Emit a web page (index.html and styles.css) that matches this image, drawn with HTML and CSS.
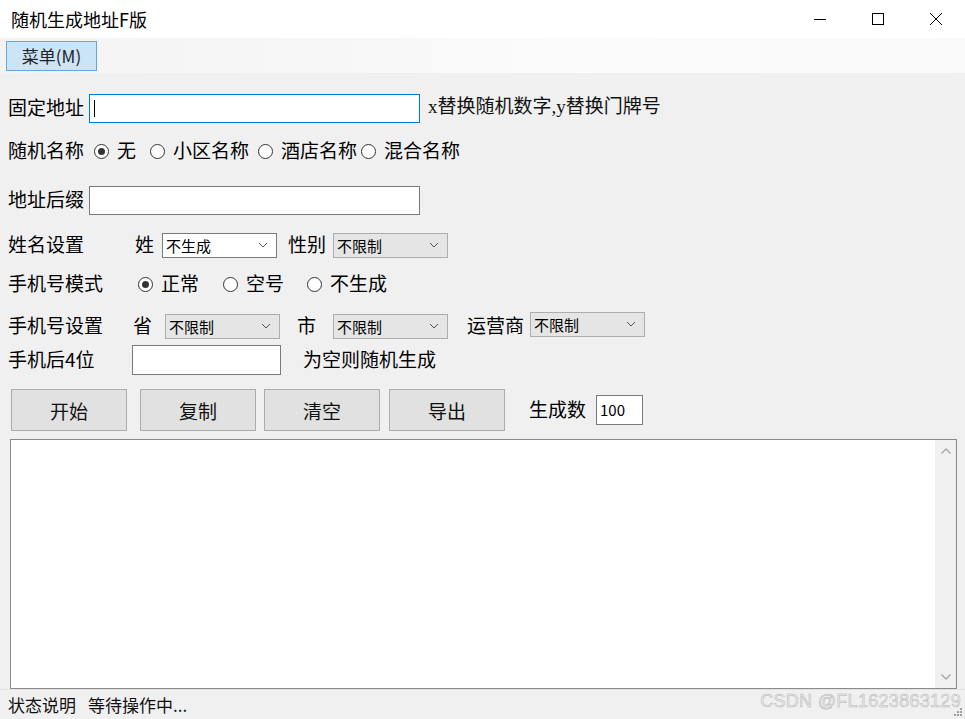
FILE: index.html
```html
<!DOCTYPE html>
<html lang="zh-CN">
<head>
<meta charset="utf-8">
<title>随机生成地址F版</title>
<link rel="stylesheet" href="styles.css">
</head>
<body>
<div class="window">
  <div class="titlebar">
    <div class="title">随机生成地址F版</div>
    <div class="controls">
      <span class="ctl"><svg width="16" height="16" viewBox="0 0 16 16"><path d="M2 8.5h12" stroke="#000" stroke-width="1"/></svg></span>
      <span class="ctl"><svg width="16" height="16" viewBox="0 0 16 16"><rect x="2.5" y="2.5" width="11" height="11" fill="none" stroke="#000" stroke-width="1"/></svg></span>
      <span class="ctl"><svg width="16" height="16" viewBox="0 0 16 16"><path d="M2 2L14 14M14 2L2 14" stroke="#000" stroke-width="1"/></svg></span>
    </div>
  </div>
  <div class="menubar">
    <div class="menuitem">菜单(M)</div>
  </div>
  <div class="content">
    <div class="row r1">
      <span class="lbl w81">固定地址</span>
      <span class="input wide focus"><span class="caret"></span></span>
      <span class="hint">x替换随机数字,y替换门牌号</span>
    </div>
    <div class="row r2">
      <span class="lbl w86">随机名称</span>
      <span class="radio ri1"><span class="dot on"></span>无</span>
      <span class="radio ri2"><span class="dot"></span>小区名称</span>
      <span class="radio ri3"><span class="dot"></span>酒店名称</span>
      <span class="radio"><span class="dot"></span>混合名称</span>
    </div>
    <div class="row r3">
      <span class="lbl w81">地址后缀</span>
      <span class="input wide"></span>
    </div>
    <div class="row r4">
      <span class="lbl w127">姓名设置</span>
      <span class="lbl w27">姓</span>
      <span class="combo white">不生成<svg class="chev" width="10" height="6" viewBox="0 0 10 6"><path d="M1 1l4 4 4-4" fill="none" stroke="#555" stroke-width="1"/></svg></span>
      <span class="lbl ml11 w45">性别</span>
      <span class="combo">不限制<svg class="chev" width="10" height="6" viewBox="0 0 10 6"><path d="M1 1l4 4 4-4" fill="none" stroke="#555" stroke-width="1"/></svg></span>
    </div>
    <div class="row r5">
      <span class="lbl w130">手机号模式</span>
      <span class="radio ri85"><span class="dot on"></span>正常</span>
      <span class="radio ri84"><span class="dot"></span>空号</span>
      <span class="radio"><span class="dot"></span>不生成</span>
    </div>
    <div class="row r6">
      <span class="lbl w125">手机号设置</span>
      <span class="lbl w32">省</span>
      <span class="combo">不限制<svg class="chev" width="10" height="6" viewBox="0 0 10 6"><path d="M1 1l4 4 4-4" fill="none" stroke="#555" stroke-width="1"/></svg></span>
      <span class="lbl ml17 w36">市</span>
      <span class="combo">不限制<svg class="chev" width="10" height="6" viewBox="0 0 10 6"><path d="M1 1l4 4 4-4" fill="none" stroke="#555" stroke-width="1"/></svg></span>
      <span class="lbl ml19 w63">运营商</span>
      <span class="combo up2">不限制<svg class="chev" width="10" height="6" viewBox="0 0 10 6"><path d="M1 1l4 4 4-4" fill="none" stroke="#555" stroke-width="1"/></svg></span>
    </div>
    <div class="row r7">
      <span class="lbl w124">手机后4位</span>
      <span class="input short"></span>
      <span class="lbl ml22">为空则随机生成</span>
    </div>
    <div class="row btnrow">
      <button class="btn">开始</button>
      <button class="btn b2">复制</button>
      <button class="btn b3">清空</button>
      <button class="btn b4">导出</button>
      <span class="lbl ml24 w67">生成数</span>
      <span class="input num">100</span>
    </div>
    <div class="textarea">
      <div class="textbody"></div>
      <div class="vscroll">
        <svg width="12" height="8" viewBox="0 0 12 8"><path d="M1.5 6.5L6 2l4.5 4.5" fill="none" stroke="#a6a6a6" stroke-width="1.4"/></svg>
        <svg width="12" height="8" viewBox="0 0 12 8"><path d="M1.5 1.5L6 6l4.5-4.5" fill="none" stroke="#a6a6a6" stroke-width="1.4"/></svg>
      </div>
    </div>
  </div>
  <div class="statusbar">
    <span class="status">状态说明</span>
    <span class="status s2">等待操作中...</span>
    <span class="watermark">CSDN @FL1623863129</span>
    <svg class="grip" width="10" height="10" viewBox="0 0 10 10">
      <rect x="7" y="1" width="2" height="2" fill="#a0a0a0"/>
      <rect x="4" y="4" width="2" height="2" fill="#a0a0a0"/>
      <rect x="7" y="4" width="2" height="2" fill="#a0a0a0"/>
      <rect x="1" y="7" width="2" height="2" fill="#a0a0a0"/>
      <rect x="4" y="7" width="2" height="2" fill="#a0a0a0"/>
      <rect x="7" y="7" width="2" height="2" fill="#a0a0a0"/>
    </svg>
  </div>
</div>
</body>
</html>
```

FILE: styles.css
```css
html, body {
  margin: 0;
  padding: 0;
  width: 965px;
  height: 719px;
  overflow: hidden;
  background: #f0f0f0;
}
body {
  font-family: "Noto Sans CJK SC", "Noto Sans", sans-serif;
  color: #000;
}
.window {
  display: flex;
  flex-direction: column;
  height: 719px;
}
.titlebar {
  height: 38px;
  flex: none;
  background: #ffffff;
  display: flex;
  align-items: center;
  justify-content: space-between;
}
.title {
  margin-left: 11px;
  font-size: 18px;
  color: #000;
  line-height: 20px;
}
.controls {
  display: flex;
}
.ctl {
  width: 58px;
  height: 38px;
  display: flex;
  align-items: center;
  justify-content: center;
}
.menubar {
  height: 35px;
  flex: none;
  background: linear-gradient(to right, #f3f3f3, #fbfbfb 60%, #f9f9f9);
  display: flex;
  align-items: center;
}
.menuitem {
  margin-left: 6px;
  width: 91px;
  height: 30px;
  box-sizing: border-box;
  border: 1px solid #5fa8e4;
  background: #cce4f7;
  font-size: 17px;
  line-height: 28px;
  text-align: center;
  color: #222;
}
.content {
  flex: none;
  display: flex;
  flex-direction: column;
  padding-top: 16px;
}
.row {
  display: flex;
  align-items: center;
  padding-left: 8px;
  font-size: 19px;
  white-space: nowrap;
  flex: none;
}
.r1 { height: 38px; }
.r2 { height: 48px; }
.r3 { height: 50px; }
.r4 { height: 40px; }
.r5 { height: 38px; }
.r6 { height: 46px; }
.r7 { height: 22px; }
.btnrow { height: 42px; margin-top: 18px; padding-left: 11px; }
.lbl {
  display: inline-block;
  font-size: 19px;
  line-height: 22px;
  padding-bottom: 2px;
  flex: none;
}
.w81 { width: 81px; }
.w86 { width: 86px; }
.w124 { width: 124px; }
.w125 { width: 125px; }
.w127 { width: 127px; }
.w130 { width: 130px; }
.w27 { width: 27px; }
.w32 { width: 32px; }
.w36 { width: 36px; }
.w45 { width: 45px; }
.w63 { width: 63px; }
.w67 { width: 67px; }
.ml11 { margin-left: 11px; }
.ml17 { margin-left: 17px; }
.ml19 { margin-left: 19px; }
.ml22 { margin-left: 22px; }
.ml24 { margin-left: 24px; }
.input {
  display: inline-block;
  box-sizing: border-box;
  background: #fff;
  border: 1px solid #7a7a7a;
  flex: none;
  position: relative;
}
.wide { width: 331px; height: 29px; }
.focus { border-color: #0078d7; }
.caret {
  position: absolute;
  left: 4px;
  top: 5px;
  width: 1px;
  height: 17px;
  background: #000;
}
.hint {
  margin-left: 8px;
  font-family: "Liberation Serif", "Noto Sans CJK SC", serif;
  font-size: 19px;
  line-height: 22px;
  padding-bottom: 2px;
  color: #111;
}
.radio {
  display: inline-flex;
  align-items: center;
  flex: none;
  font-size: 19px;
  line-height: 22px;
}
.radio-text { padding-bottom: 2px; }
.dot {
  width: 13px;
  height: 13px;
  border: 1px solid #333;
  border-radius: 50%;
  margin-right: 8px;
  margin-bottom: -2px;
  position: relative;
  box-sizing: content-box;
  background: #fff;
}
.radio { padding-bottom: 2px; }
.dot.on::after {
  content: "";
  position: absolute;
  left: 3px;
  top: 3px;
  width: 7px;
  height: 7px;
  border-radius: 50%;
  background: #333;
}
.ri1 { width: 56px; }
.ri2 { width: 108px; }
.ri3 { width: 103px; }
.ri85 { width: 85px; }
.ri84 { width: 84px; }
.combo {
  display: inline-flex;
  align-items: center;
  justify-content: space-between;
  box-sizing: border-box;
  width: 115px;
  height: 25px;
  padding: 0 8px 0 3px;
  border: 1px solid #adadad;
  background: #e5e5e5;
  font-size: 15px;
  color: #000;
  flex: none;
}
.combo.white {
  background: #fff;
  border-color: #7a7a7a;
}
.up2 { position: relative; top: -2px; }
.short { width: 149px; height: 30px; }
.btn {
  width: 116px;
  height: 42px;
  box-sizing: border-box;
  border: 1px solid #adadad;
  background: #e1e1e1;
  font-family: "Noto Sans CJK SC", sans-serif;
  font-size: 19px;
  color: #111;
  padding: 0;
  flex: none;
}
.b2 { margin-left: 13px; }
.b3 { margin-left: 8px; }
.b4 { margin-left: 9px; }
.num {
  width: 47px;
  height: 30px;
  font-size: 15px;
  line-height: 28px;
  padding-left: 3px;
}
.textarea {
  margin: 8px 8px 0 10px;
  height: 250px;
  box-sizing: border-box;
  border: 1px solid #8a8a8a;
  background: #fff;
  display: flex;
  flex: none;
}
.textbody { flex: 1; }
.vscroll {
  width: 21px;
  background: #f0f0f0;
  display: flex;
  flex-direction: column;
  justify-content: space-between;
  align-items: center;
  padding: 7px 0 7px;
}
.statusbar {
  height: 30px;
  box-sizing: border-box;
  flex: none;
  display: flex;
  align-items: center;
  position: relative;
  border-top: 1px solid #e3e3e3;
}
.status {
  font-size: 17px;
  margin-left: 8px;
  color: #111;
}
.s2 { margin-left: 12px; }
.watermark {
  position: absolute;
  right: 4px;
  top: 1px;
  font-family: "Liberation Sans", sans-serif;
  font-size: 18px;
  color: #ececec;
  -webkit-text-stroke: 0.5px #b4b4b4;
  letter-spacing: 0.3px;
}
.grip {
  position: absolute;
  right: 2px;
  bottom: 2px;
}
```
